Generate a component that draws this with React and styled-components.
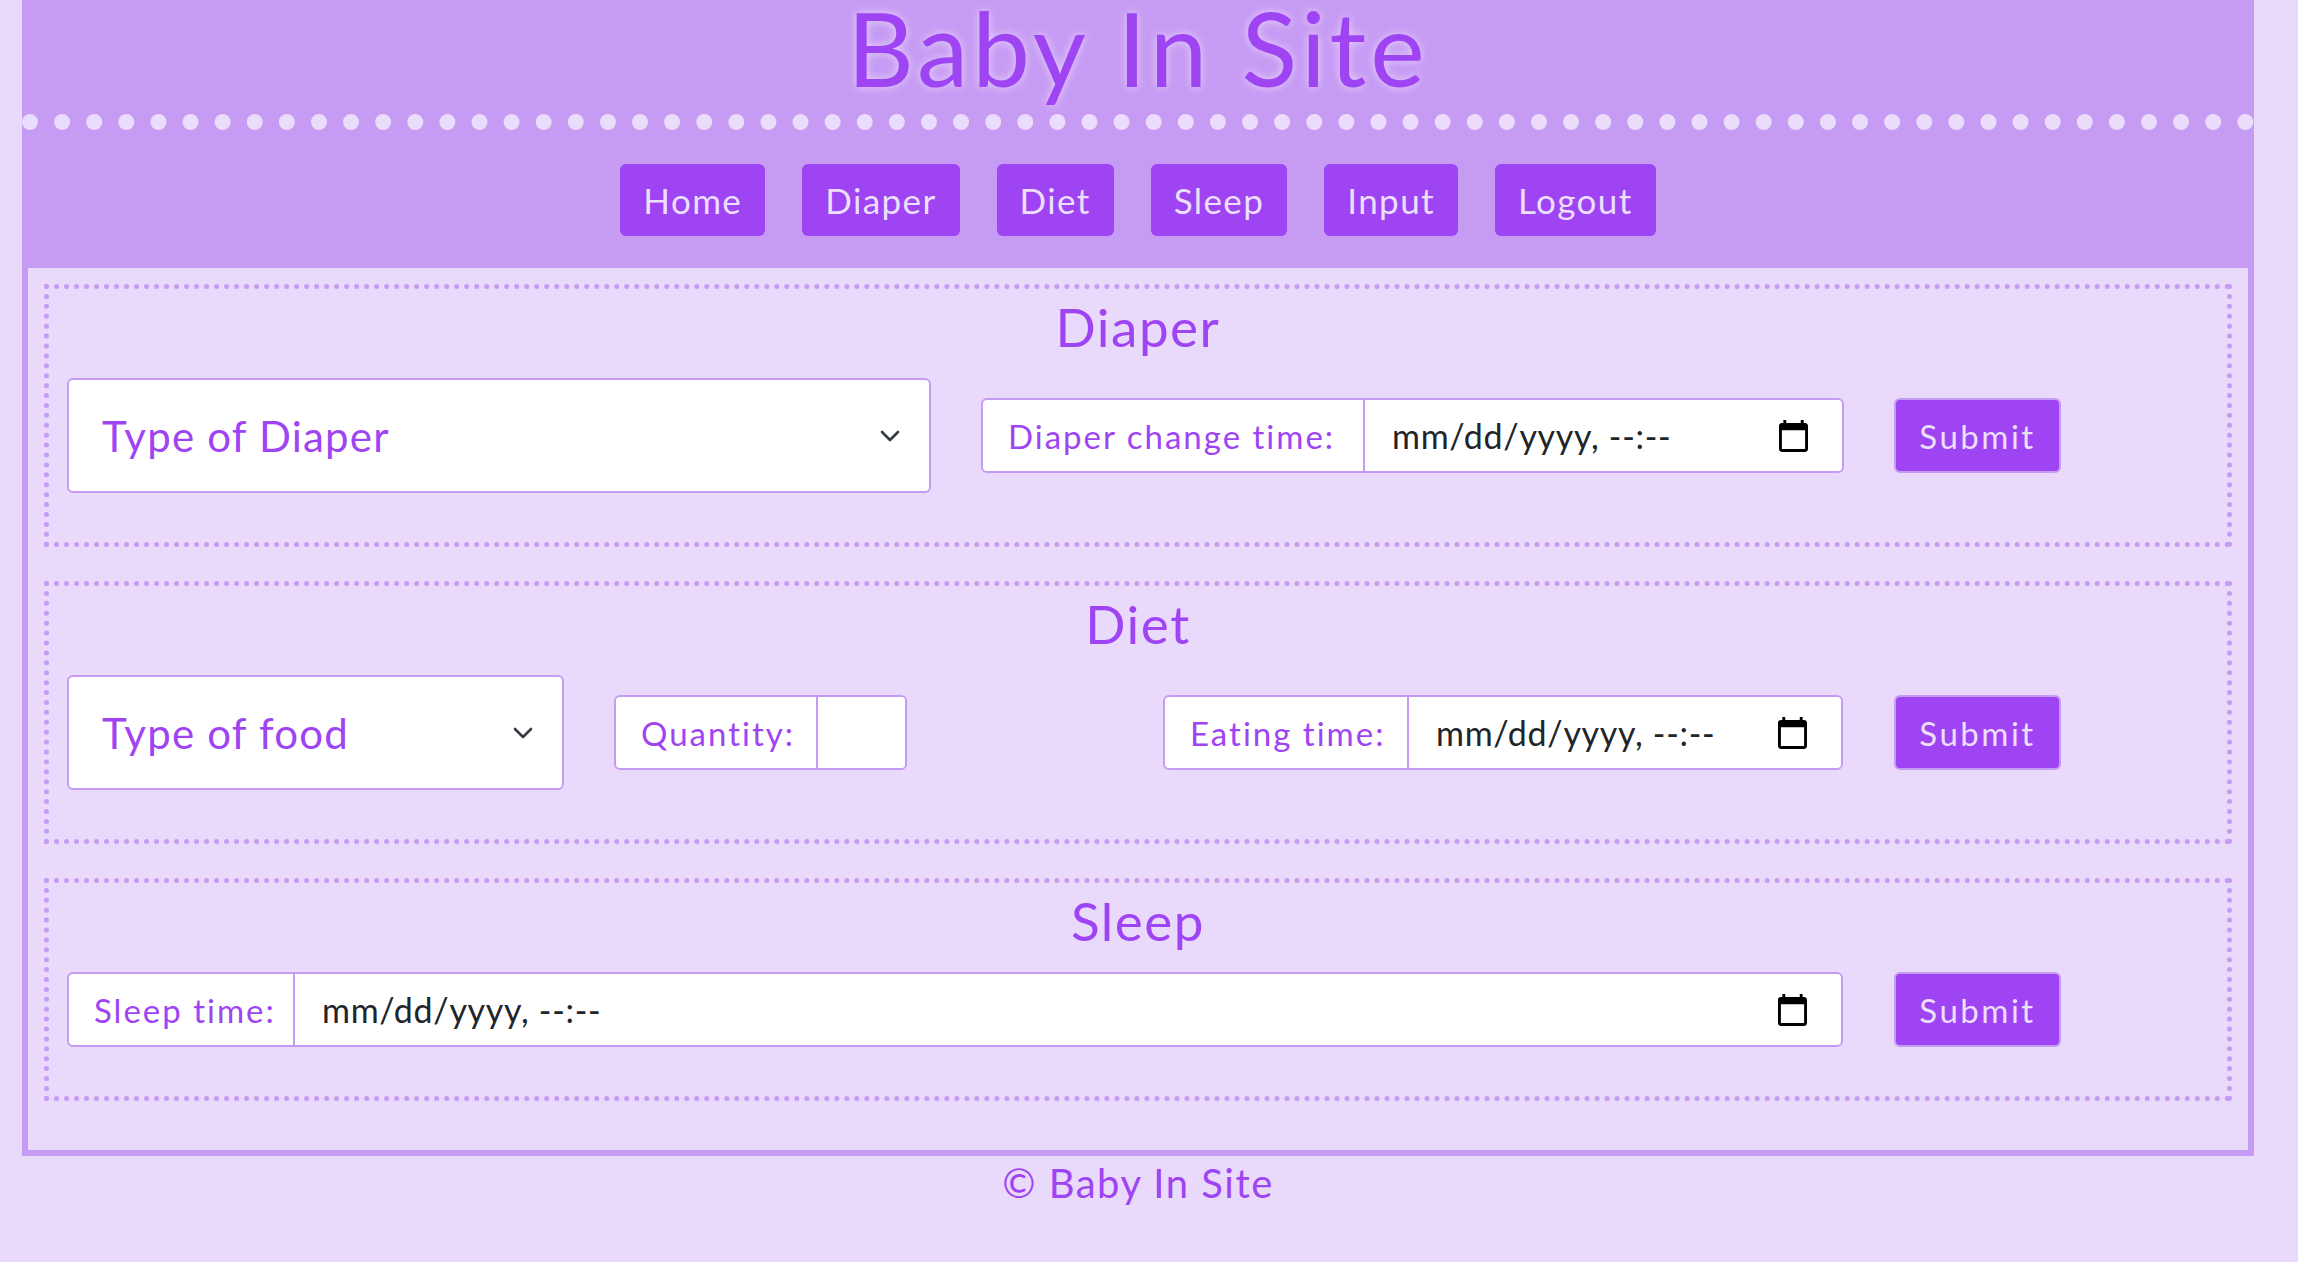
import React from 'react';
import styled, { createGlobalStyle } from 'styled-components';

const purple = '#9f44f3';
const lilac = '#c69bf4';
const pale = '#e9d9fa';
const paleText = '#ecdffb';

const GlobalStyle = createGlobalStyle`
  body {
    margin: 0;
    background: ${pale};
    font-family: 'Lato', 'Noto Sans', sans-serif;
  }
`;

const Wrapper = styled.div`
  width: 2232px;
  margin-left: 22px;
`;

const Header = styled.header`
  background: ${lilac};
  padding-bottom: 32px;
`;

const Title = styled.h1`
  margin: 0;
  text-align: center;
  font-size: 103px;
  line-height: 94px;
  font-weight: 400;
  letter-spacing: 4px;
  color: ${purple};
  text-shadow: 0 0 10px rgba(240, 228, 253, 0.8);
`;

const Dots = styled.div`
  margin-top: 20px;
  height: 0;
  border-bottom: 16px dotted #ebdcfb;
`;

const Nav = styled.nav`
  margin-top: 34px;
  display: flex;
  justify-content: center;
  gap: 37px;
`;

const NavButton = styled.button`
  height: 72px;
  padding: 0 23px;
  border: none;
  border-radius: 6px;
  background: ${purple};
  color: ${paleText};
  font-family: inherit;
  font-size: 35px;
  letter-spacing: 1.4px;
  cursor: pointer;
`;

const Main = styled.main`
  border: 6px solid ${lilac};
  border-top: 0;
  padding: 16px 16px 49px;
  display: flex;
  flex-direction: column;
  gap: 34px;
`;

const Section = styled.section`
  border: 5px dotted ${lilac};
  padding: 6px 0 49px;
`;

const SectionTitle = styled.h2`
  margin: 0;
  text-align: center;
  font-size: 53px;
  line-height: 64px;
  font-weight: 400;
  letter-spacing: 1.5px;
  color: ${purple};
`;

const Row = styled.div`
  margin-top: 19px;
  padding-left: 18px;
  display: flex;
  align-items: center;
  gap: 51px;
`;

const Fields = styled.div`
  width: 1776px;
  display: flex;
  align-items: center;
  gap: 50px;
`;

const SelectWrap = styled.div`
  position: relative;
  width: ${p => p.$width}px;
  flex: none;
`;

const Select = styled.select`
  width: 100%;
  height: 115px;
  box-sizing: border-box;
  appearance: none;
  border: 2px solid ${lilac};
  border-radius: 6px;
  background: #fff;
  color: ${purple};
  font-family: inherit;
  font-size: 42px;
  letter-spacing: 1.2px;
  padding: 0 70px 0 33px;
  outline: none;
`;

const Chevron = styled.svg`
  position: absolute;
  right: 31px;
  top: 50%;
  margin-top: -6px;
  pointer-events: none;
`;

const Group = styled.div`
  display: flex;
  box-sizing: border-box;
  height: 75px;
  width: ${p => (p.$width ? `${p.$width}px` : 'auto')};
  flex: ${p => (p.$width ? 'none' : '1')};
  margin-left: ${p => (p.$push ? 'auto' : '0')};
  border: 2px solid ${lilac};
  border-radius: 6px;
  background: #fff;
  overflow: hidden;
`;

const GroupLabel = styled.label`
  flex: none;
  width: ${p => p.$width}px;
  box-sizing: border-box;
  display: flex;
  align-items: center;
  padding-left: 25px;
  border-right: 2px solid ${lilac};
  color: ${purple};
  font-size: 33px;
  letter-spacing: 2px;
  white-space: nowrap;
`;

const DateField = styled.div`
  flex: 1;
  display: flex;
  align-items: center;
  justify-content: space-between;
  padding: 0 34px 0 27px;
  color: #212529;
  font-size: 34px;
  letter-spacing: 0.7px;
  white-space: nowrap;
`;

const QuantityInput = styled.input`
  flex: 1;
  min-width: 0;
  border: none;
  outline: none;
  font-family: inherit;
  font-size: 33px;
`;

const SubmitButton = styled.button`
  flex: none;
  width: 167px;
  height: 75px;
  box-sizing: border-box;
  border: 2px solid ${lilac};
  border-radius: 6px;
  background: ${purple};
  color: ${paleText};
  font-family: inherit;
  font-size: 33px;
  letter-spacing: 2.5px;
  cursor: pointer;
`;

const Footer = styled.footer`
  padding-top: 4px;
  text-align: center;
  font-size: 40px;
  line-height: 46px;
  letter-spacing: 1.5px;
  color: ${purple};
`;

const ChevronIcon = () => (
  <Chevron width="20" height="12" viewBox="0 0 20 12">
    <path d="M2 2 L10 10 L18 2" fill="none" stroke="#343a40" strokeWidth="2.6" strokeLinecap="round" strokeLinejoin="round" />
  </Chevron>
);

const CalendarIcon = () => (
  <svg width="29" height="32" viewBox="2 1 20 22">
    <path d="M20 3h-1V1h-2v2H7V1H5v2H4c-1.1 0-2 .9-2 2v16c0 1.1.9 2 2 2h16c1.1 0 2-.9 2-2V5c0-1.1-.9-2-2-2zm0 18H4V8h16v13z" fill="#000" />
  </svg>
);

const TypeSelect = ({ width, placeholder }) => (
  <SelectWrap $width={width}>
    <Select defaultValue="">
      <option value="" disabled>{placeholder}</option>
    </Select>
    <ChevronIcon />
  </SelectWrap>
);

const DateGroup = ({ label, labelWidth, width, push }) => (
  <Group $width={width} $push={push}>
    <GroupLabel $width={labelWidth}>{label}</GroupLabel>
    <DateField>
      <span>mm/dd/yyyy, --:--</span>
      <CalendarIcon />
    </DateField>
  </Group>
);

const navItems = ['Home', 'Diaper', 'Diet', 'Sleep', 'Input', 'Logout'];

export default function App() {
  return (
    <>
      <GlobalStyle />
      <Wrapper>
        <Header>
          <Title>Baby In Site</Title>
          <Dots />
          <Nav>
            {navItems.map(item => (
              <NavButton key={item}>{item}</NavButton>
            ))}
          </Nav>
        </Header>
        <Main>
          <Section>
            <SectionTitle>Diaper</SectionTitle>
            <Row>
              <Fields>
                <TypeSelect width={864} placeholder="Type of Diaper" />
                <DateGroup label="Diaper change time:" labelWidth={382} width={863} />
              </Fields>
              <SubmitButton>Submit</SubmitButton>
            </Row>
          </Section>
          <Section>
            <SectionTitle>Diet</SectionTitle>
            <Row>
              <Fields>
                <TypeSelect width={497} placeholder="Type of food" />
                <Group $width={293}>
                  <GroupLabel $width={202}>Quantity:</GroupLabel>
                  <QuantityInput type="text" />
                </Group>
                <DateGroup label="Eating time:" labelWidth={244} width={680} push />
              </Fields>
              <SubmitButton>Submit</SubmitButton>
            </Row>
          </Section>
          <Section>
            <SectionTitle>Sleep</SectionTitle>
            <Row>
              <Fields>
                <DateGroup label="Sleep time:" labelWidth={226} />
              </Fields>
              <SubmitButton>Submit</SubmitButton>
            </Row>
          </Section>
        </Main>
        <Footer>© Baby In Site</Footer>
      </Wrapper>
    </>
  );
}
